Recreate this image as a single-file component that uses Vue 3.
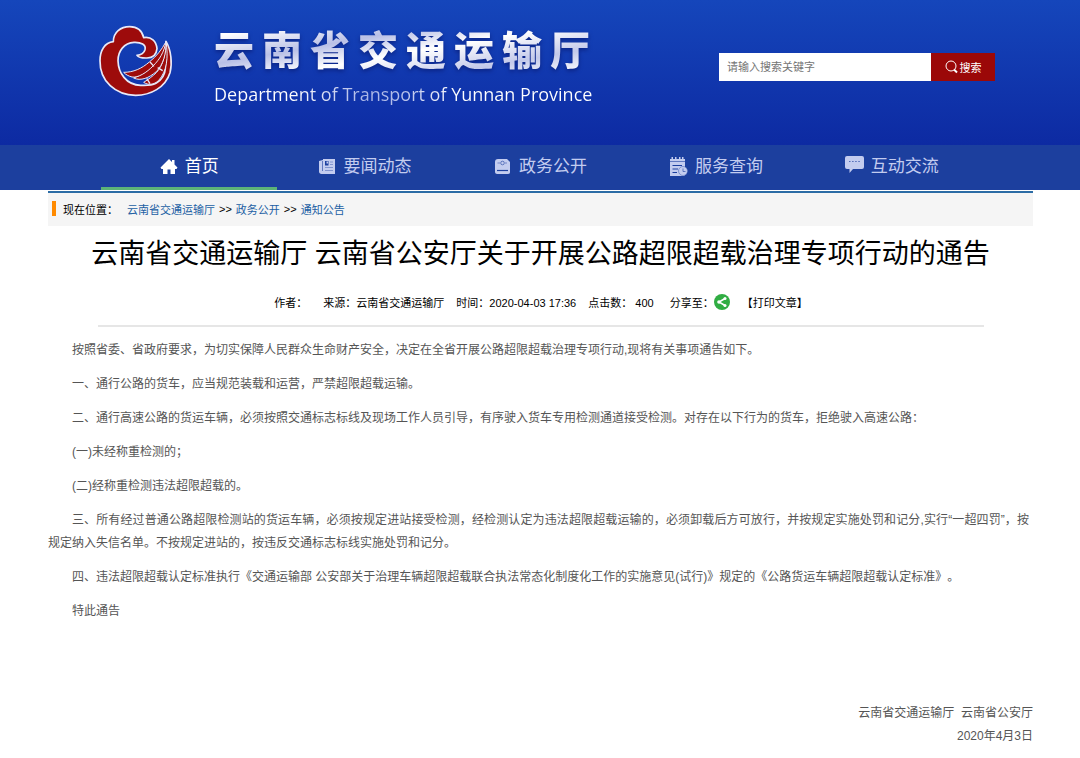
<script setup>
import { ref } from 'vue'

const keyword = ref('')

const navItems = [
  { id: 'home', label: '首页', active: true },
  { id: 'news', label: '要闻动态', active: false },
  { id: 'affairs', label: '政务公开', active: false },
  { id: 'query', label: '服务查询', active: false },
  { id: 'chat', label: '互动交流', active: false }
]

const paragraphs = [
  '按照省委、省政府要求，为切实保障人民群众生命财产安全，决定在全省开展公路超限超载治理专项行动,现将有关事项通告如下。',
  '一、通行公路的货车，应当规范装载和运营，严禁超限超载运输。',
  '二、通行高速公路的货运车辆，必须按照交通标志标线及现场工作人员引导，有序驶入货车专用检测通道接受检测。对存在以下行为的货车，拒绝驶入高速公路：',
  '(一)未经称重检测的；',
  '(二)经称重检测违法超限超载的。',
  '三、所有经过普通公路超限检测站的货运车辆，必须按规定进站接受检测，经检测认定为违法超限超载运输的，必须卸载后方可放行，并按规定实施处罚和记分,实行“一超四罚”，按规定纳入失信名单。不按规定进站的，按违反交通标志标线实施处罚和记分。',
  '四、违法超限超载认定标准执行《交通运输部 公安部关于治理车辆超限超载联合执法常态化制度化工作的实施意见(试行)》规定的《公路货运车辆超限超载认定标准》。',
  '特此通告'
]
</script>

<template>
  <div class="page">
    <header class="banner">
      <svg class="emblem" viewBox="24 27 225 219" aria-hidden="true">
        <g fill="#9d0b0b" stroke="#e9e9f7" stroke-width="5" stroke-linejoin="round">
          <path d="M70 80C70 52 92 35 119 35C143 35 156 46 161 68C184 64 199 79 201 101C199 121 187 130 168 129C153 129 144 126 141 121C151 120 162 114 165 104C169 89 153 81 132 82C102 84 84 108 84 137C85 173 108 210 152 211C172 212 186 211 198 205C216 195 225 180 226 160L228 79C244 105 247 147 240 173C226 218 181 241 137 241C77 240 29 199 30 137C30 106 44 83 70 80Z" />
        </g>
        <g fill="#9d0b0b" stroke="#e9e9f7" stroke-width="3" stroke-linejoin="round">
          <path d="M228 80C236 128 230 170 206 196C192 210 174 211 161 202C174 194 188 184 200 172C219 150 227 120 228 80Z" />
          <path d="M228 80C229 118 219 148 200 169C177 189 152 199 131 189C154 181 174 168 188 151C206 131 219 112 228 80Z" />
          <path d="M228 80C222 112 209 133 190 152C170 173 144 189 126 186C115 183 107 179 101 172C130 172 155 161 178 141C200 123 214 106 228 80Z" />
        </g>
        <path d="M180 141L192 154M203 158L218 167M170 190L180 206" fill="none" stroke="#e9e9f7" stroke-width="4" />
      </svg>
      <div class="titles">
        <div class="site-name">云南省交通运输厅</div>
        <div class="site-en">Department of Transport of Yunnan Province</div>
      </div>
      <form class="search" @submit.prevent>
        <input v-model="keyword" type="text" aria-label="请输入搜索关键字" placeholder="请输入搜索关键字" />
        <button type="submit">
          <svg width="13" height="14" viewBox="0 0 13 14" fill="none" stroke="#fff" aria-hidden="true">
            <circle cx="6" cy="6" r="5" />
            <path d="M9 9.500L12 12.500" stroke-width="2" />
          </svg>
          搜索
        </button>
      </form>
    </header>

    <nav class="nav">
      <a v-for="item in navItems" :key="item.id" href="#" :class="{ active: item.active }">
        <svg v-if="item.id === 'home'" class="icon" viewBox="0 0 18 18" fill="currentColor" aria-hidden="true">
          <path d="M9 1L0.500 9.500L1.500 11H3V16H7.500V11.500H10.500V16H15V11H16.500L17.500 9.500L14.500 6.500V2H12V4Z" />
        </svg>
        <svg v-else-if="item.id === 'news'" class="icon" viewBox="0 0 18 18" fill="currentColor" aria-hidden="true">
          <path d="M5 1H17V16H3.500C2 16 1 15 1 13.500V3L5 2Z" />
          <path d="M4.500 3V13" fill="none" stroke="#1c3f9e" stroke-width="0.600" />
          <path d="M7 3H10.500V7.500H7Z" fill="#1c3f9e" />
          <path d="M8.500 3.500H10V5.500H8.500Z" />
          <path d="M12 4H15M12 6.500H15M7 9.500H15M7 12.500H15" fill="none" stroke="#1c3f9e" stroke-width="0.400" />
        </svg>
        <svg v-else-if="item.id === 'affairs'" class="icon" viewBox="0 0 18 18" fill="currentColor" aria-hidden="true">
          <path d="M4 1H13L16 4V14C16 15 15.500 16 14 16H3C2 16 1 15 1 14V4C1 2 2 1 4 1Z" />
          <circle cx="8.500" cy="5" r="1.800" fill="none" stroke="#1c3f9e" stroke-width="0.600" />
          <path d="M3.500 5H6M11 5H13" fill="none" stroke="#1c3f9e" stroke-width="0.500" />
          <path d="M3 12.500H14" fill="none" stroke="#1c3f9e" stroke-width="1.200" />
        </svg>
        <svg v-else-if="item.id === 'query'" class="icon tall" viewBox="0 0 19 20" fill="currentColor" aria-hidden="true">
          <path d="M1 2H2.500V0H4V2H6V0H7.500V2H10V0H11.500V2H13V0H14.500V2H16V10A5 5 0 0 1 15 19H1Z" />
          <path d="M1 4.500H16" fill="none" stroke="#1c3f9e" stroke-width="0.600" />
          <path d="M3.500 8.500H13M3.500 12H9M3.500 15.500H8" fill="none" stroke="#1c3f9e" stroke-width="1.200" />
          <circle cx="14" cy="14" r="4.500" stroke="#1c3f9e" stroke-width="0.400" />
          <path d="M14 11.500V14.500H16.500" fill="none" stroke="#1c3f9e" stroke-width="0.600" />
        </svg>
        <svg v-else class="icon speech" viewBox="0 0 19 18" fill="currentColor" aria-hidden="true">
          <path d="M2 0H17Q19 0 19 2V11Q19 13 17 13H8L4.500 17V13H2Q0 13 0 11V2Q0 0 2 0Z" />
          <path d="M4 5.500H15" fill="none" stroke="#1c3f9e" stroke-width="0.700" stroke-dasharray="1.500 1.600" />
        </svg>
        <span>{{ item.label }}</span>
      </a>
    </nav>

    <main class="content">
      <div class="crumbs">
        <i class="mark"></i>
        <span class="here">现在位置：</span>
        <a href="#">云南省交通运输厅</a>
        <span>&gt;&gt;</span>
        <a href="#">政务公开</a>
        <span>&gt;&gt;</span>
        <a href="#">通知公告</a>
      </div>

      <article>
        <h1>云南省交通运输厅 云南省公安厅关于开展公路超限超载治理专项行动的通告</h1>
        <div class="meta">
          <span class="author">作者：</span>
          <span>来源：云南省交通运输厅</span>
          <span>时间：2020-04-03 17:36</span>
          <span class="hits">点击数： 400</span>
          <span class="share">
            分享至：
            <a href="#" aria-label="分享">
              <svg width="16" height="16" viewBox="0 0 16 16" aria-hidden="true">
                <circle cx="8" cy="8" r="8" fill="#31ad43" />
                <path d="M11 4.500L5 8L11 11.500" fill="none" stroke="#fff" stroke-width="1.500" />
                <g fill="#fff">
                  <circle cx="11" cy="4.500" r="1.500" />
                  <circle cx="5" cy="8" r="1.800" />
                  <circle cx="11" cy="11.500" r="1.500" />
                </g>
              </svg>
            </a>
          </span>
          <a class="print" href="#">【打印文章】</a>
        </div>
        <div class="body">
          <p v-for="(text, i) in paragraphs" :key="i">{{ text }}</p>
        </div>
        <footer class="sign">
          <div>云南省交通运输厅&nbsp; 云南省公安厅</div>
          <div>2020年4月3日</div>
        </footer>
      </article>
    </main>
  </div>
</template>

<style>
body {
  margin: 0;
  background: #fff;
}
</style>

<style scoped>
.page {
  font-family: "Liberation Sans", "Noto Sans CJK SC", sans-serif;
  font-size: 12px;
  color: #000;
  text-spacing-trim: space-all;
}

a {
  text-decoration: none;
  color: inherit;
}

.banner {
  display: flex;
  align-items: flex-start;
  box-sizing: border-box;
  height: 145px;
  padding: 0 85px 0 98px;
  background: linear-gradient(#1546bb, #0d2aa2);
}

.emblem {
  flex: none;
  width: 75px;
  height: 73px;
  margin-top: 24px;
}

.titles {
  width: 376px;
  margin: 25px auto 0 41px;
}

.site-name {
  font-family: "Noto Sans CJK SC", sans-serif;
  font-size: 40px;
  font-weight: 900;
  line-height: 46px;
  text-align-last: justify;
  text-justify: inter-character;
  color: transparent;
  background: linear-gradient(170deg, #fff 10%, #b9c0e6 35%, #fff 55%, #c3c9ea 80%, #fff);
  background-clip: text;
  filter: drop-shadow(0 2px 2px #0b2384);
}

.site-en {
  width: max-content;
  margin-top: 10px;
  font-family: "Open Sans", "Noto Sans", sans-serif;
  font-size: 18px;
  line-height: 26px;
  white-space: nowrap;
  color: transparent;
  background: linear-gradient(90deg, #fff 20%, #a9b5e6 40%, #b6c0ea 50%, #fff 65%);
  background-clip: text;
}

.search {
  display: flex;
  width: 276px;
  height: 28px;
  margin-top: 53px;
}

.search input {
  flex: 1;
  min-width: 0;
  box-sizing: border-box;
  border: 0;
  padding: 0 8px;
  font: inherit;
  font-size: 11px;
  color: #333;
  background: #fff;
}

.search input::placeholder {
  color: #757575;
}

.search button {
  display: flex;
  align-items: center;
  justify-content: center;
  gap: 2px;
  width: 64px;
  padding: 0;
  border: 0;
  font: inherit;
  font-size: 11px;
  color: #fff;
  background: #9b0808;
}

.nav {
  display: flex;
  height: 45px;
  padding: 0 101px;
  background: #1c3f9e;
}

.nav a {
  flex: 1;
  display: flex;
  align-items: center;
  justify-content: center;
  gap: 7px;
  box-sizing: border-box;
  padding: 2px 0 0 1px;
  border-bottom: 3px solid transparent;
  font-size: 17px;
  line-height: 26px;
  color: #c3ccef;
}

.nav a.active {
  color: #fff;
  border-bottom-color: #5cb377;
}

.icon {
  width: 18px;
  height: 18px;
}

.icon.tall {
  width: 19px;
  height: 20px;
}

.icon.speech {
  width: 19px;
  height: 18px;
  margin-bottom: 4px;
}

.content {
  padding: 1px 47px 21px 48px;
}

.crumbs {
  display: flex;
  align-items: center;
  gap: 4px;
  box-sizing: border-box;
  height: 35px;
  padding: 0 0 2px 4px;
  border-top: 2px solid #2c6ca5;
  background: #f5f5f5;
  font-size: 11px;
}

.crumbs a {
  color: #2260a4;
}

.mark {
  width: 4px;
  height: 15px;
  margin-right: 3px;
  background: #ff8a00;
}

.here {
  margin-right: 5px;
}

h1 {
  margin: 8px 0 0;
  font-size: 27px;
  font-weight: 400;
  line-height: 40px;
  text-align: center;
}

.meta {
  display: flex;
  align-items: center;
  justify-content: center;
  gap: 12px;
  box-sizing: border-box;
  height: 53px;
  margin: 0 49px 0 50px;
  padding-top: 4px;
  border-bottom: 2px solid #e6e6e6;
  font-size: 11px;
}

.author {
  margin-right: 4px;
}

.share {
  display: flex;
  align-items: center;
  margin-left: 4px;
}

.share svg {
  display: block;
}

.body {
  margin-top: 12px;
  color: #555;
}

.body p {
  margin: 0 0 11px;
  padding-right: 4px;
  line-height: 23px;
  text-indent: 2em;
  text-align: justify;
}

.sign {
  margin-top: 79px;
  line-height: 23px;
  text-align: right;
  color: #555;
}
</style>
